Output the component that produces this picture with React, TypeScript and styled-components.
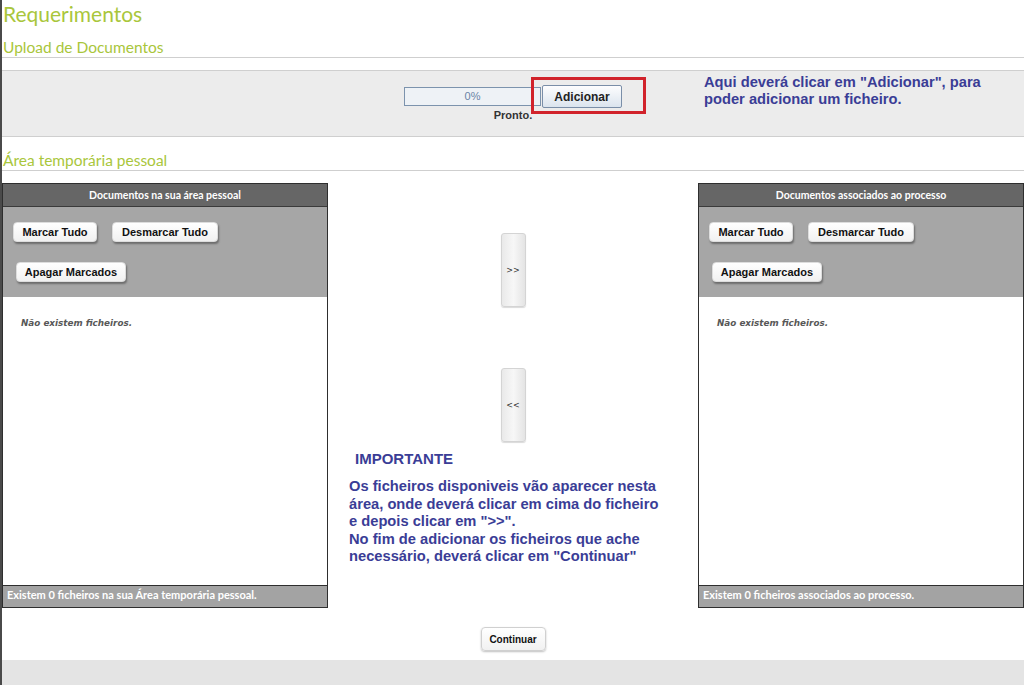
import React from "react";
import styled, { createGlobalStyle } from "styled-components";

const Global = createGlobalStyle`
  html, body { margin: 0; padding: 0; background: #fff; }
  body { font-family: "Liberation Sans", Arial, sans-serif; }
  * { box-sizing: border-box; }
`;

const Page = styled.div`
  width: 1024px;
  height: 685px;
  border-left: 2px solid #4a4a4a;
  display: flex;
  flex-direction: column;
  overflow: hidden;
`;

const Title = styled.h1`
  margin: 0;
  padding: 0 0 0 1px;
  height: 36px;
  font-family: "Lato", "DejaVu Sans", sans-serif;
  font-weight: 400;
  font-size: 21px;
  line-height: 27px;
  color: #a9c63b;
`;

const SectionTitle = styled.h2`
  margin: 0;
  padding: 0 0 0 1px;
  height: 22px;
  font-family: "Lato", "DejaVu Sans", sans-serif;
  font-weight: 400;
  font-size: 15.5px;
  line-height: 22px;
  color: #a9c63b;
  border-bottom: 1px solid #cfcfcf;
`;

const UploadBand = styled.div`
  margin-top: 12px;
  height: 67px;
  background: #ececec;
  border-top: 1px solid #cfcfcf;
  border-bottom: 1px solid #cfcfcf;
  display: grid;
  grid-template-columns: 402px 218px 1fr;
  padding-top: 14px;
`;

const UploadCenter = styled.div`
  display: flex;
  flex-direction: column;
  align-items: center;
`;

const UploadRow = styled.div`
  display: flex;
  align-items: center;
`;

const Progress = styled.div`
  width: 137px;
  height: 19px;
  border: 1px solid #7c93ad;
  background: #eef2f6;
  color: #6a84a6;
  font-size: 11px;
  line-height: 17px;
  text-align: center;
`;

const Highlight = styled.div`
  position: relative;
  margin-left: 1px;
`;

const RedFrame = styled.div`
  position: absolute;
  left: -11px;
  top: -8px;
  width: 115px;
  height: 37px;
  border: 3px solid #d1232b;
  pointer-events: none;
`;

const SwingButton = styled.button`
  width: 80px;
  height: 23px;
  border: 1px solid #7a8ea8;
  border-radius: 2px;
  background: linear-gradient(#fdfdfe, #dbe4ee);
  font-family: "Liberation Sans", Arial, sans-serif;
  font-size: 12px;
  font-weight: 700;
  color: #222;
  padding: 0;
`;

const Status = styled.div`
  margin-top: 1px;
  font-size: 11px;
  font-weight: 700;
  color: #333;
`;

const Note = styled.p`
  margin: 0;
  padding: 0 0 0 82px;
  margin-top: -11px;
  font-size: 14.7px;
  font-weight: 700;
  line-height: 17px;
  color: #3a3d96;
`;

const AreaTitle = styled(SectionTitle)`
  margin-top: 12px;
`;

const Main = styled.div`
  margin-top: 12px;
  display: flex;
`;

const Panel = styled.section`
  width: 326px;
  height: 425px;
  border: 1px solid #2e2e2e;
  display: flex;
  flex-direction: column;
`;

const PanelHeader = styled.div`
  height: 23px;
  background: #666;
  border-bottom: 1px solid #3a3a3a;
  color: #fff;
  font-family: "Lato", "DejaVu Sans", sans-serif;
  font-weight: 700;
  font-size: 10.5px;
  line-height: 22px;
  text-align: center;
`;

const Toolbar = styled.div`
  height: 90px;
  background: #a6a6a6;
  padding: 15px 0 0 10px;
  display: flex;
  flex-wrap: wrap;
  align-content: flex-start;
  row-gap: 20px;
`;

const ToolRow = styled.div<{ $indent?: number }>`
  width: 100%;
  display: flex;
  gap: 15px;
  padding-left: ${(p) => p.$indent ?? 0}px;
`;

const PillButton = styled.button<{ $w: number }>`
  width: ${(p) => p.$w}px;
  height: 20px;
  border: 1px solid #ddd;
  border-radius: 4px;
  background: linear-gradient(#fff, #f1f1f1);
  box-shadow: 1px 2px 2px rgba(0, 0, 0, 0.35);
  font-family: "Liberation Sans", Arial, sans-serif;
  font-size: 11px;
  font-weight: 700;
  color: #111;
  padding: 0;
`;

const PanelBody = styled.div`
  flex: 1;
  background: #fff;
  padding: 21px 0 0 18px;
  font-family: "DejaVu Sans", sans-serif;
  font-weight: 700;
  font-size: 8.8px;
  font-style: italic;
  color: #585858;
`;

const PanelFooter = styled.div`
  height: 22px;
  background: #a3a3a3;
  border-top: 1px solid #2e2e2e;
  padding-left: 4px;
  color: #fff;
  font-family: "Lato", "DejaVu Sans", sans-serif;
  font-weight: 700;
  font-size: 11px;
  line-height: 18px;
`;

const Middle = styled.div`
  width: 370px;
  display: flex;
  flex-direction: column;
  align-items: center;
  padding-top: 50px;
`;

const MoveButton = styled.button<{ $gap?: number }>`
  width: 25px;
  height: 74px;
  margin-top: ${(p) => p.$gap ?? 0}px;
  border: 1px solid #d4d4d4;
  border-radius: 3px;
  background: linear-gradient(90deg, #e9e9e9, #f7f7f7 50%, #e4e4e4);
  box-shadow: 0 1px 1px rgba(0, 0, 0, 0.15);
  font-family: "DejaVu Sans", sans-serif;
  font-size: 8px;
  color: #333;
  padding: 0;
`;

const Info = styled.div`
  align-self: stretch;
  padding-left: 21px;
  margin-top: 8px;
  color: #3a3d96;
  font-weight: 700;
`;

const InfoTitle = styled.div`
  padding-left: 6px;
  font-size: 15px;
  line-height: 18px;
  margin-bottom: 10px;
`;

const InfoText = styled.p`
  margin: 0;
  font-size: 14.7px;
  line-height: 17.5px;
`;

const Actions = styled.div`
  display: flex;
  justify-content: center;
  padding: 19px 0 0 0;
  height: 52px;
`;

const ContinueButton = styled(PillButton)`
  height: 24px;
  box-shadow: 0 1px 2px rgba(0, 0, 0, 0.25);
  border-color: #d0d0d0;
  font-size: 10px;
`;

const BottomBand = styled.div`
  flex: 1;
  background: #e4e4e4;
`;

function FilePanel({ title, footer }: { title: string; footer: string }) {
  return (
    <Panel>
      <PanelHeader>{title}</PanelHeader>
      <Toolbar>
        <ToolRow>
          <PillButton $w={84}>Marcar Tudo</PillButton>
          <PillButton $w={106}>Desmarcar Tudo</PillButton>
        </ToolRow>
        <ToolRow $indent={3}>
          <PillButton $w={110}>Apagar Marcados</PillButton>
        </ToolRow>
      </Toolbar>
      <PanelBody>Não existem ficheiros.</PanelBody>
      <PanelFooter>{footer}</PanelFooter>
    </Panel>
  );
}

export default function App() {
  return (
    <>
      <Global />
      <Page>
        <Title>Requerimentos</Title>
        <SectionTitle>Upload de Documentos</SectionTitle>
        <UploadBand>
          <div />
          <UploadCenter>
            <UploadRow>
              <Progress>0%</Progress>
              <Highlight>
                <SwingButton>Adicionar</SwingButton>
                <RedFrame />
              </Highlight>
            </UploadRow>
            <Status>Pronto.</Status>
          </UploadCenter>
          <Note>
            Aqui deverá clicar em "Adicionar", para
            <br />
            poder adicionar um ficheiro.
          </Note>
        </UploadBand>
        <AreaTitle>Área temporária pessoal</AreaTitle>
        <Main>
          <FilePanel
            title="Documentos na sua área pessoal"
            footer="Existem 0 ficheiros na sua Área temporária pessoal."
          />
          <Middle>
            <MoveButton>&gt;&gt;</MoveButton>
            <MoveButton $gap={61}>&lt;&lt;</MoveButton>
            <Info>
              <InfoTitle>IMPORTANTE</InfoTitle>
              <InfoText>
                Os ficheiros disponiveis vão aparecer nesta
                <br />
                área, onde deverá clicar em cima do ficheiro
                <br />
                e depois clicar em "&gt;&gt;".
                <br />
                No fim de adicionar os ficheiros que ache
                <br />
                necessário, deverá clicar em "Continuar"
              </InfoText>
            </Info>
          </Middle>
          <FilePanel
            title="Documentos associados ao processo"
            footer="Existem 0 ficheiros associados ao processo."
          />
        </Main>
        <Actions>
          <ContinueButton $w={65}>Continuar</ContinueButton>
        </Actions>
        <BottomBand />
      </Page>
    </>
  );
}
